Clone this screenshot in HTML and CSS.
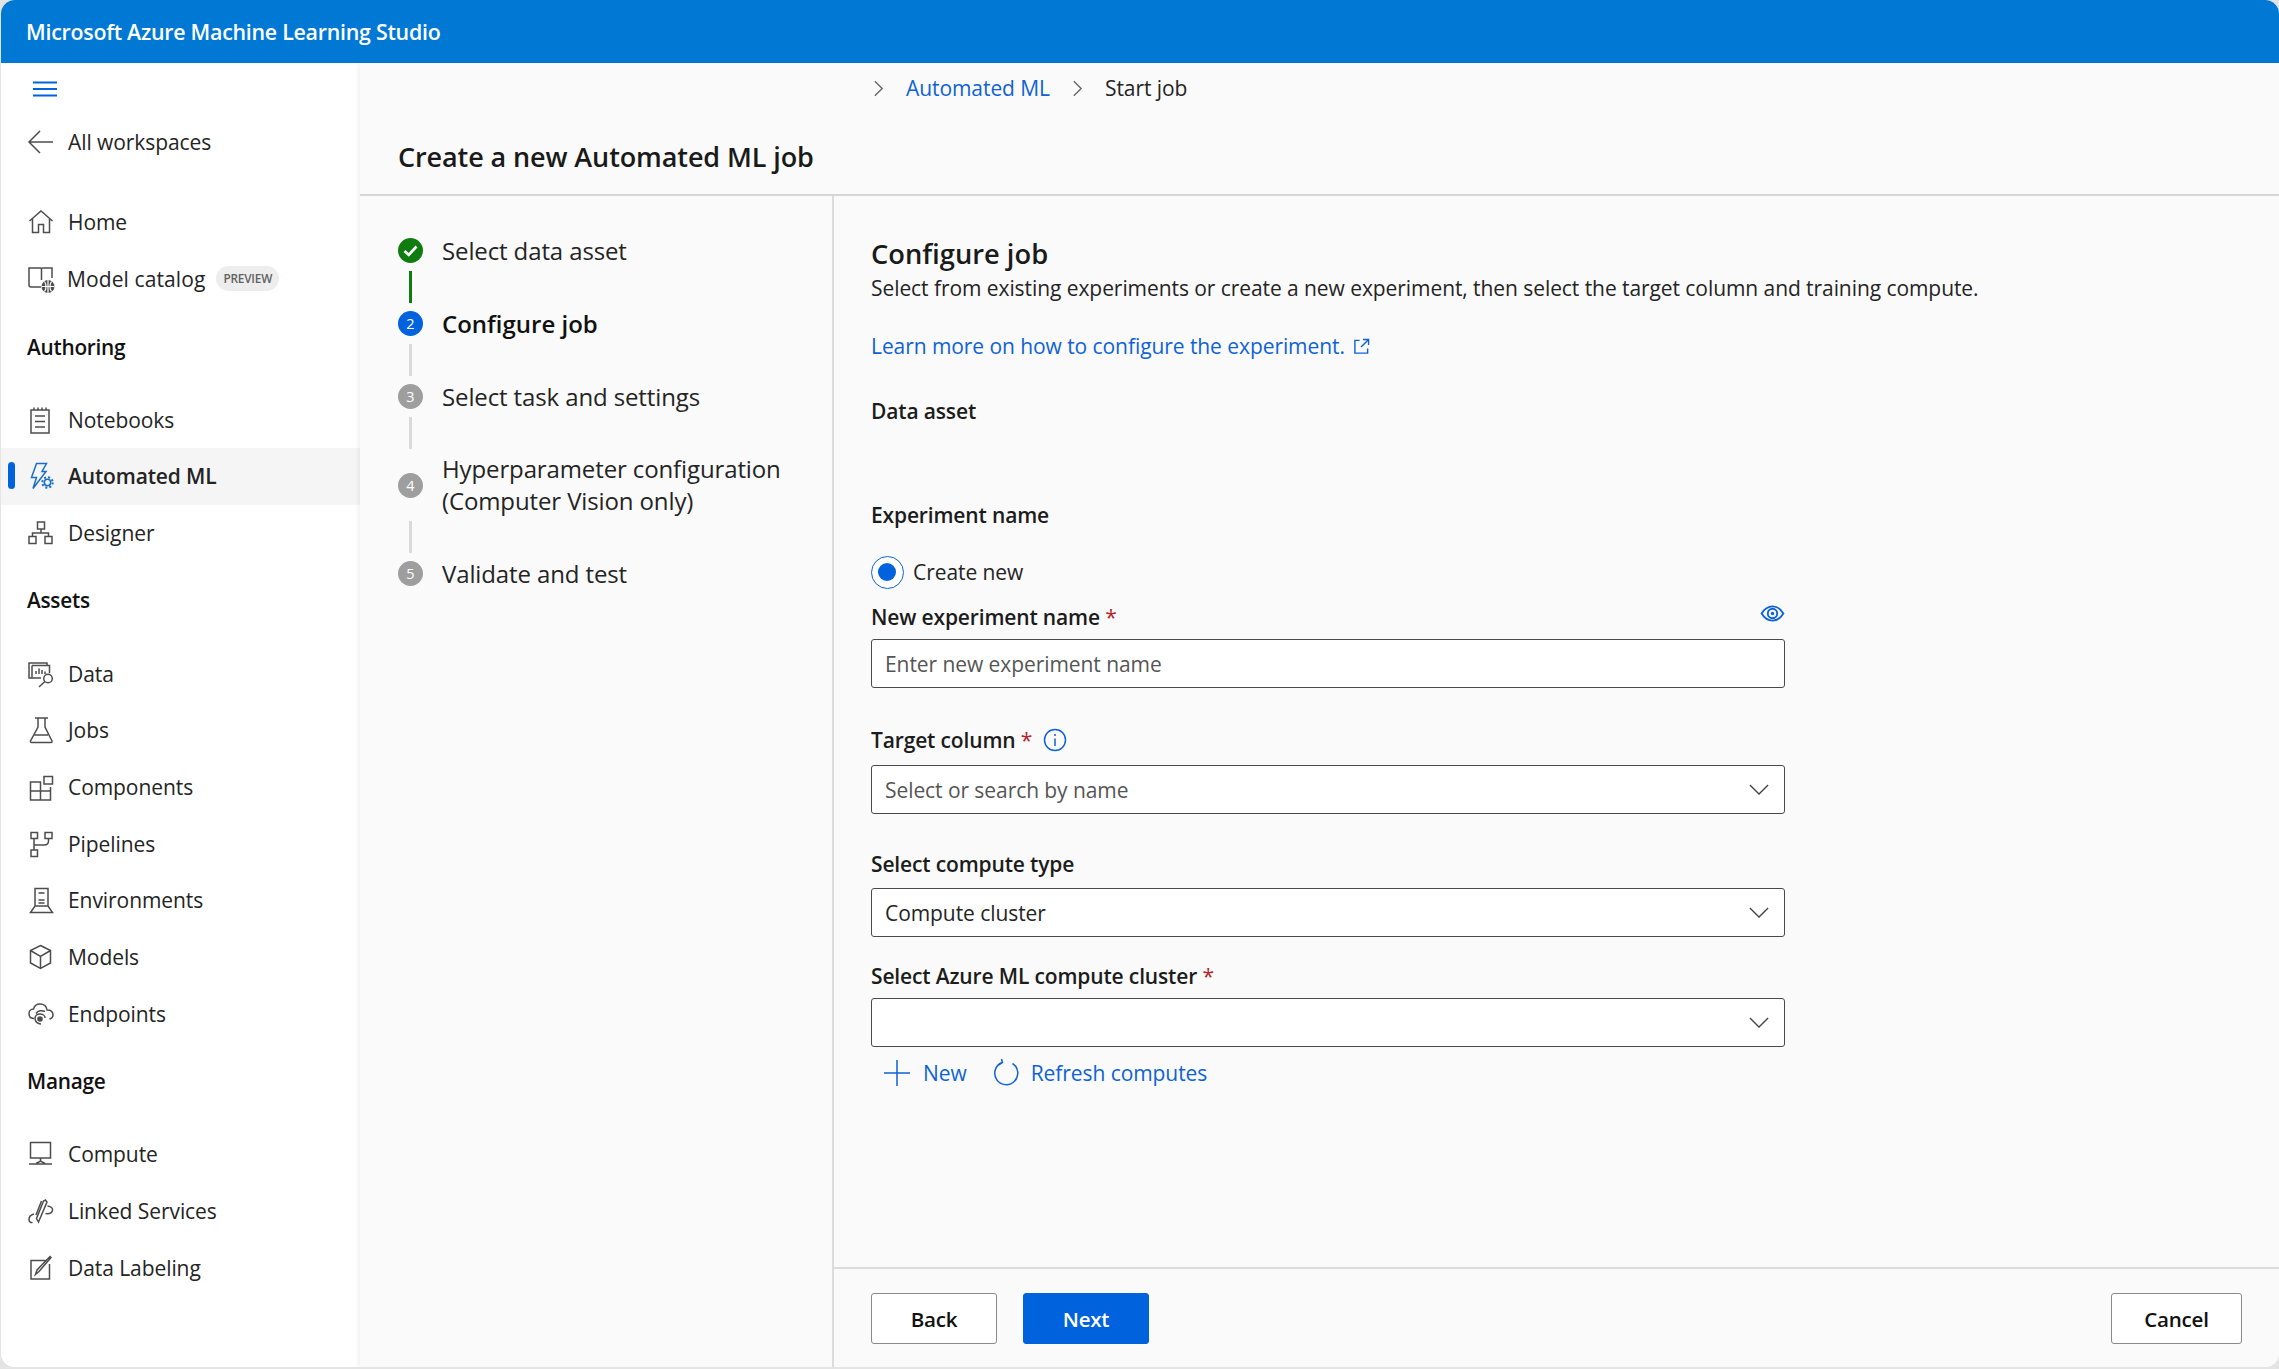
FILE: index.html
```html
<!DOCTYPE html>
<html lang="en">
<head>
<meta charset="utf-8">
<title>Create a new Automated ML job</title>
<link rel="stylesheet" href="styles.css">
</head>
<body>
<div class="app">
  <header class="topbar">Microsoft Azure Machine Learning Studio</header>
  <div class="shell">
    <nav class="sidebar">
      <div class="burger-row">
        <svg class="burger" viewBox="0 0 26 16"><path d="M1 1.5H25M1 8H25M1 14.5H25"/></svg>
      </div>
      <a class="nav-row back-row">
        <svg class="ico" viewBox="0 0 28 28"><path d="M26 14H2M13 3L2 14L13 25"/></svg>
        <span>All workspaces</span>
      </a>
      <a class="nav-row first-row">
        <svg class="ico" viewBox="0 0 28 28"><path d="M2.5 13L14 3L25.5 13M5.5 11V24.5H11.5V16.5H16.5V24.5H22.5V11"/></svg>
        <span>Home</span>
      </a>
      <a class="nav-row catalog-row">
        <svg class="ico" viewBox="0 0 28 28"><path d="M14 22H4A2 2 0 0 1 2 20V3H13.5C14 3 14.3 3.5 14.5 4V15M14.5 4C14.7 3.4 15 3 15.6 3H25V13"/><circle class="solid" cx="21" cy="21.5" r="6.5"/><path class="light" d="M14.5 21.5H27.5M21 15V28M17.5 16.5C19.5 19.5 19.5 24 17.5 26.5M24.5 16.5C22.5 19.5 22.5 24 24.5 26.5"/></svg>
        <span class="catalog-text">Model catalog</span>
        <span class="badge">PREVIEW</span>
      </a>
      <h2 class="nav-head head-authoring">Authoring</h2>
      <a class="nav-row first-row">
        <svg class="ico" viewBox="0 0 28 28"><path d="M4 4H22V27H4ZM7 1.5V4M11 1.5V4M15 1.5V4M19 1.5V4M8 10H18M8 15.5H18M8 21H18"/></svg>
        <span>Notebooks</span>
      </a>
      <a class="nav-row active">
        <svg class="ico blue" viewBox="0 0 28 28"><path d="M9.5 1.5H19.5L15 9.5H19L6 26.5L9.5 15.5H4.5Z"/><circle cx="20.5" cy="20.5" r="3.2"/><circle class="gear" cx="20.5" cy="20.5" r="5.2"/></svg>
        <span>Automated ML</span>
      </a>
      <a class="nav-row">
        <svg class="ico" viewBox="0 0 28 28"><path d="M10.5 3H17.5V10H10.5ZM2 17.5H9V24.5H2ZM18 17.5H25V24.5H18ZM14 10V14M5.5 17.5V14H21.5V17.5"/></svg>
        <span>Designer</span>
      </a>
      <h2 class="nav-head head-next">Assets</h2>
      <a class="nav-row first-row">
        <svg class="ico" viewBox="0 0 28 28"><path d="M5 18H2V3H20V5.5M5 5.5H22.5V13M5 5.5V18H14M9 14V11M12 14V8.5M15 14V10M18 14V11.5"/><circle cx="21" cy="18.5" r="4.3"/><path d="M17.7 21.7L12 27"/></svg>
        <span>Data</span>
      </a>
      <a class="nav-row">
        <svg class="ico" viewBox="0 0 28 28"><path d="M8 2H21M11 2V11L3.5 25C3.2 26 3.8 26.5 4.5 26.5H24C24.8 26.5 25.3 25.8 25 25L18 11V2M7.5 19H21"/></svg>
        <span>Jobs</span>
      </a>
      <a class="nav-row">
        <svg class="ico" viewBox="0 0 28 28"><path d="M3.5 9H13.5V27H3.5ZM3.5 18H23.5V27H13.5M13.5 18V9M23.5 18V14M17 3.5H25.5V11H17Z"/></svg>
        <span>Components</span>
      </a>
      <a class="nav-row">
        <svg class="ico" viewBox="0 0 28 28"><path d="M4 2.5H10.5V8.5H4ZM18 2.5H25V8.5H18ZM4 20H10.5V26.5H4ZM7 8.5V20M7 15H17C20 15 21.5 13 21.5 11V8.5"/></svg>
        <span>Pipelines</span>
      </a>
      <a class="nav-row">
        <svg class="ico" viewBox="0 0 28 28"><path d="M8 20V2.5H21V20M8 20H21L25.5 26.5H3.5ZM11.5 7H17.5M11.5 17H17.5M11.5 14H17.5"/></svg>
        <span>Environments</span>
      </a>
      <a class="nav-row">
        <svg class="ico" viewBox="0 0 28 28"><path d="M13.5 2.5L23.5 7.5V20L13.5 25.5L3.5 20V7.5ZM3.5 7.5L13.5 13.5L23.5 7.5M13.5 13.5V25.5"/></svg>
        <span>Models</span>
      </a>
      <a class="nav-row">
        <svg class="ico" viewBox="0 0 28 28"><path d="M7 18.5C3.5 18.5 2 16 2 13.5C2 11 4 9 6.5 9C7.5 5.5 10 4 13 4C17 4 19.5 6.5 20 10C23 10 26 11.5 26 15C26 17 24.5 18.5 22.5 19M9 13.5C11 10.5 15 10 18 11.5M14 24C10.5 24 8 21.5 8 18.5C8 15.5 10.5 14 13 14C15.5 14 18 15.5 18 18"/><circle class="fill" cx="13" cy="19" r="2.8"/></svg>
        <span>Endpoints</span>
      </a>
      <h2 class="nav-head head-next">Manage</h2>
      <a class="nav-row first-row">
        <svg class="ico" viewBox="0 0 28 28"><path d="M3.5 2.5H23.5V18H3.5ZM13.5 18V22M9 23.5L13.5 21L18 23.5M2 24H25"/></svg>
        <span>Compute</span>
      </a>
      <a class="nav-row">
        <svg class="ico" viewBox="0 0 28 28"><path d="M7 17C3.5 18 2 20 2 22.5C2 24.5 3.5 26 5.5 25.5M11.5 25L20 5L18.5 3L16.5 4L9.5 21.5ZM14.5 4L9 18M20.5 9C24 9.5 26 11 25.5 13.5C25 15.5 22.5 17 18.5 16.5"/></svg>
        <span>Linked Services</span>
      </a>
      <a class="nav-row">
        <svg class="ico" viewBox="0 0 28 28"><path d="M22.5 10V25H4V6.5H18.5M8.5 20.5L10 16L23 2.5L24 3.5L12 17.5Z"/></svg>
        <span>Data Labeling</span>
      </a>
    </nav>

    <main class="main">
      <div class="crumbs">
        <svg class="crumb-chev" viewBox="0 0 12 20"><path d="M2 2L10 10L2 18"/></svg>
        <a class="link">Automated ML</a>
        <svg class="crumb-chev" viewBox="0 0 12 20"><path d="M2 2L10 10L2 18"/></svg>
        <span>Start job</span>
      </div>
      <h1 class="page-title">Create a new Automated ML job</h1>
      <div class="body">
        <aside class="steps">
          <div class="step">
            <span class="dot done"><svg viewBox="0 0 25 25"><path d="M6.5 13L10.7 17L18.5 8.5"/></svg></span>
            <span>Select data asset</span>
          </div>
          <div class="line done-line"></div>
          <div class="step current">
            <span class="dot now">2</span>
            <span>Configure job</span>
          </div>
          <div class="line"></div>
          <div class="step">
            <span class="dot">3</span>
            <span>Select task and settings</span>
          </div>
          <div class="line"></div>
          <div class="step tall">
            <span class="dot">4</span>
            <span>Hyperparameter configuration<br>(Computer Vision only)</span>
          </div>
          <div class="line"></div>
          <div class="step">
            <span class="dot">5</span>
            <span>Validate and test</span>
          </div>
        </aside>

        <section class="pane">
          <div class="form">
            <h2 class="pane-title">Configure job</h2>
            <p class="desc">Select from existing experiments or create a new experiment, then select the target column and training compute.</p>
            <p class="learn">
              <a class="link">Learn more on how to configure the experiment.</a>
              <svg class="ext" viewBox="0 0 18 18"><path d="M7 2.5H2V16H15.5V11M10.5 1.5H16.5V7.5M16.5 1.5L8.5 9.5"/></svg>
            </p>
            <div class="label data-label">Data asset</div>
            <div class="label exp-label">Experiment name</div>
            <div class="radio-row">
              <span class="radio"></span>
              <span>Create new</span>
            </div>
            <div class="label-row name-row">
              <span class="label">New experiment name <span class="req">*</span></span>
              <svg class="eye" viewBox="0 0 26 18"><path d="M1.5 9C4.5 4 8.5 1.5 13 1.5C17.5 1.5 21.5 4 24.5 9C21.5 14 17.5 16.5 13 16.5C8.5 16.5 4.5 14 1.5 9Z"/><circle cx="13" cy="9" r="5"/><circle class="pupil" cx="13" cy="9" r="1.8"/></svg>
            </div>
            <div class="box gap-name"><span class="ph">Enter new experiment name</span></div>

            <div class="label-row target-row">
              <span class="label">Target column <span class="req">*</span></span>
              <svg class="info" viewBox="0 0 24 24"><circle cx="12" cy="12" r="10.5"/><path d="M12 10.5V18M12 6V8"/></svg>
            </div>
            <div class="box gap-target">
              <span class="ph">Select or search by name</span>
              <svg class="chev" viewBox="0 0 22 12"><path d="M1 1L11 11L21 1"/></svg>
            </div>

            <div class="label compute-label">Select compute type</div>
            <div class="box gap-compute">
              <span>Compute cluster</span>
              <svg class="chev" viewBox="0 0 22 12"><path d="M1 1L11 11L21 1"/></svg>
            </div>

            <div class="label cluster-label">Select Azure ML compute cluster <span class="req">*</span></div>
            <div class="box gap-name">
              <span></span>
              <svg class="chev" viewBox="0 0 22 12"><path d="M1 1L11 11L21 1"/></svg>
            </div>

            <div class="actions">
              <a class="action">
                <svg class="plus" viewBox="0 0 26 26"><path d="M13 0V26M0 13H26"/></svg>
                <span>New</span>
              </a>
              <a class="action refresh-action">
                <svg class="refresh" viewBox="0 0 28 28"><path d="M10 3.5A11.5 11.5 0 1 0 20.5 4.5M9.5 0L10.5 3.5L6.5 6"/></svg>
                <span>Refresh computes</span>
              </a>
            </div>
          </div>
          <footer class="footer">
            <button class="btn">Back</button>
            <button class="btn primary">Next</button>
            <button class="btn cancel">Cancel</button>
          </footer>
        </section>
      </div>
    </main>
  </div>
</div>
</body>
</html>
```
FILE: styles.css
```css
* { box-sizing: border-box; }
html, body { margin: 0; padding: 0; }
body {
  width: 2279px;
  height: 1369px;
  overflow: hidden;
  background: #e4e4e4;
  font-family: "Open Sans", "Noto Sans", sans-serif;
  font-size: 21px;
  color: #242424;
  letter-spacing: -0.07px;
}
.app {
  margin-left: 1px;
  height: 1367px;
  border-radius: 14px;
  overflow: hidden;
  display: flex;
  flex-direction: column;
  background: #fff;
}
.topbar {
  height: 63px;
  flex: none;
  background: #0078d4;
  color: #fff;
  font-size: 21.4px;
  font-weight: 600;
  line-height: 64px;
  letter-spacing: -0.27px;
  padding-left: 25px;
}
.shell { flex: 1; min-height: 0; display: flex; }

.sidebar {
  width: 359px;
  flex: none;
  background: #fff;
  display: flex;
  flex-direction: column;
}
.burger-row { height: 52px; padding: 18px 0 0 31px; }
.burger { display: block; width: 26px; height: 16px; fill: none; stroke: #0062dd; stroke-width: 2; }
.nav-row {
  height: 56.67px;
  flex: none;
  display: flex;
  align-items: center;
  gap: 13px;
  padding-left: 26px;
  color: #242424;
  position: relative;
}
.back-row { height: 54px; }
.first-row { margin-top: 25px; }
.catalog-row { gap: 11px; margin-top: 0; }
.catalog-text { letter-spacing: 0.1px; margin-left: 1px; margin-right: 1px; }
.ico {
  width: 28px;
  height: 28px;
  flex: none;
  fill: none;
  stroke: #4d4d4d;
  stroke-width: 1.5;
}
.ico .solid { fill: #4d4d4d; stroke: none; }
.ico .light { stroke: #fff; stroke-width: 1.2; }
.ico .fill { fill: #4d4d4d; stroke: none; }
.ico.blue { stroke: #1a70c8; }
.ico .gear { stroke-width: 2; stroke-dasharray: 2 2.08; }
.badge {
  height: 25px;
  padding: 0 7px;
  margin-left: -1px;
  border-radius: 13px;
  background: #ededed;
  color: #616161;
  font-size: 11.8px;
  font-weight: 600;
  line-height: 25px;
  letter-spacing: -0.2px;
}
.active { background: #f5f5f5; font-weight: 600; letter-spacing: -0.15px; }
.active::before {
  content: "";
  position: absolute;
  left: 7px;
  top: 14px;
  width: 7px;
  height: 27px;
  border-radius: 4px;
  background: #0062dd;
}
.nav-head {
  height: 40px;
  margin: 0;
  padding-left: 26px;
  font-size: 20.8px;
  font-weight: 600;
  line-height: 40px;
  letter-spacing: -0.25px;
  color: #111;
}
.head-authoring { margin-top: 20px; margin-bottom: -1px; }
.head-next { margin-top: 19px; }

.main {
  flex: 1;
  min-width: 0;
  display: flex;
  flex-direction: column;
  background: #fafafa;
  box-shadow: -2px 0 4px rgba(0, 0, 0, .06);
  position: relative;
}
.crumbs {
  height: 50px;
  flex: none;
  display: flex;
  align-items: center;
  padding-left: 513px;
  gap: 22px;
}
.crumb-chev { width: 11px; height: 19px; fill: none; stroke: #666; stroke-width: 1.5; }
.link { color: #0f62d6; }
.page-title {
  height: 83px;
  flex: none;
  margin: 0;
  padding-left: 38px;
  font-size: 27px;
  font-weight: 600;
  line-height: 88px;
  letter-spacing: -0.1px;
  color: #1a1a1a;
  border-bottom: 2px solid #d6d6d6;
}
.body { flex: 1; min-height: 0; display: flex; }

.steps {
  width: 474px;
  flex: none;
  padding: 34px 0 0 38px;
  border-right: 2px solid #dcdcdc;
  font-size: 24px;
  letter-spacing: -0.12px;
}
.step {
  min-height: 41px;
  display: flex;
  align-items: center;
  gap: 19px;
  line-height: 32px;
}
.step.tall { min-height: 72px; }
.step.current { font-weight: 600; color: #111; letter-spacing: 0; }
.dot {
  width: 25px;
  height: 25px;
  flex: none;
  border-radius: 50%;
  background: #9e9e9e;
  color: #fff;
  font-size: 14.5px;
  font-weight: 400;
  line-height: 25px;
  text-align: center;
  letter-spacing: 0;
}
.dot.now { background: #0062dd; }
.dot.done { background: #107c10; }
.dot.done svg { display: block; width: 25px; height: 25px; fill: none; stroke: #fff; stroke-width: 2.6; }
.line { width: 3px; height: 32px; margin-left: 11px; background: #dadada; }
.done-line { background: #107c10; }

.pane { flex: 1; min-width: 0; display: flex; flex-direction: column; }
.form { flex: 1; min-height: 0; padding: 40px 0 0 37px; }
.pane-title {
  margin: 0;
  height: 36px;
  font-size: 27.3px;
  font-weight: 600;
  line-height: 36px;
  letter-spacing: 0;
  color: #1a1a1a;
}
.desc { margin: 1px 0 0; height: 30px; line-height: 30px; white-space: nowrap; }
.learn { margin: 28px 0 0; height: 30px; line-height: 30px; display: flex; align-items: center; gap: 8px; }
.ext { width: 17px; height: 17px; fill: none; stroke: #0f62d6; stroke-width: 1.5; }
.label { height: 30px; line-height: 30px; font-weight: 600; color: #1c1c1c; letter-spacing: -0.15px; }
.data-label { margin-top: 35px; }
.exp-label { margin-top: 74px; }
.radio-row { margin-top: 25px; height: 34px; display: flex; align-items: center; gap: 9px; }
.radio {
  width: 33px;
  height: 33px;
  border: 1.5px solid #0f62d6;
  border-radius: 50%;
  background: #fff;
  position: relative;
}
.radio::after {
  content: "";
  position: absolute;
  left: 6px;
  top: 6px;
  width: 18px;
  height: 18px;
  border-radius: 50%;
  background: #0062dd;
}
.label-row { display: flex; align-items: center; height: 30px; width: 914px; }
.name-row { margin-top: 13px; justify-content: space-between; }
.target-row { margin-top: 37px; gap: 11px; }
.req { color: #b3262b; font-weight: 400; }
.eye { width: 25px; height: 17px; margin-bottom: 8px; fill: none; stroke: #0f62d6; stroke-width: 2; }
.eye .pupil { fill: #0f62d6; stroke: none; }
.info { width: 24px; height: 24px; fill: none; stroke: #0f62d6; stroke-width: 1.5; }
.box {
  width: 914px;
  height: 49px;
  border: 1.5px solid #4a4a4a;
  border-radius: 3px;
  background: #fff;
  display: flex;
  align-items: center;
  justify-content: space-between;
  padding: 0 15px 0 13px;
}
.ph { color: #555; }
.chev { width: 20px; height: 11px; fill: none; stroke: #444; stroke-width: 1.5; }
.gap-name { margin-top: 7px; }
.gap-target { margin-top: 10px; }
.gap-compute { margin-top: 9px; }
.compute-label { margin-top: 35px; }
.cluster-label { margin-top: 24px; }
.actions { margin-top: 11px; height: 30px; padding-left: 13px; display: flex; align-items: center; gap: 25px; color: #0f62d6; }
.action { display: flex; align-items: center; gap: 13px; }
.refresh-action { gap: 11px; }
.plus { width: 26px; height: 26px; fill: none; stroke: #0f62d6; stroke-width: 1.5; }
.refresh { width: 28px; height: 28px; fill: none; stroke: #0f62d6; stroke-width: 1.5; }

.footer {
  height: 100px;
  flex: none;
  border-top: 2px solid #dcdcdc;
  padding: 24px 37px 0 37px;
  display: flex;
  align-items: flex-start;
  gap: 26px;
}
.btn {
  width: 126px;
  height: 51px;
  border: 1.5px solid #8a8a8a;
  border-radius: 3px;
  background: #fff;
  font-family: inherit;
  font-size: 20.6px;
  font-weight: 600;
  letter-spacing: -0.25px;
  color: #111;
  padding: 0;
}
.btn.primary { background: #0062dd; border-color: #0062dd; color: #fff; }
.btn.cancel { width: 131px; margin-left: auto; }
```
